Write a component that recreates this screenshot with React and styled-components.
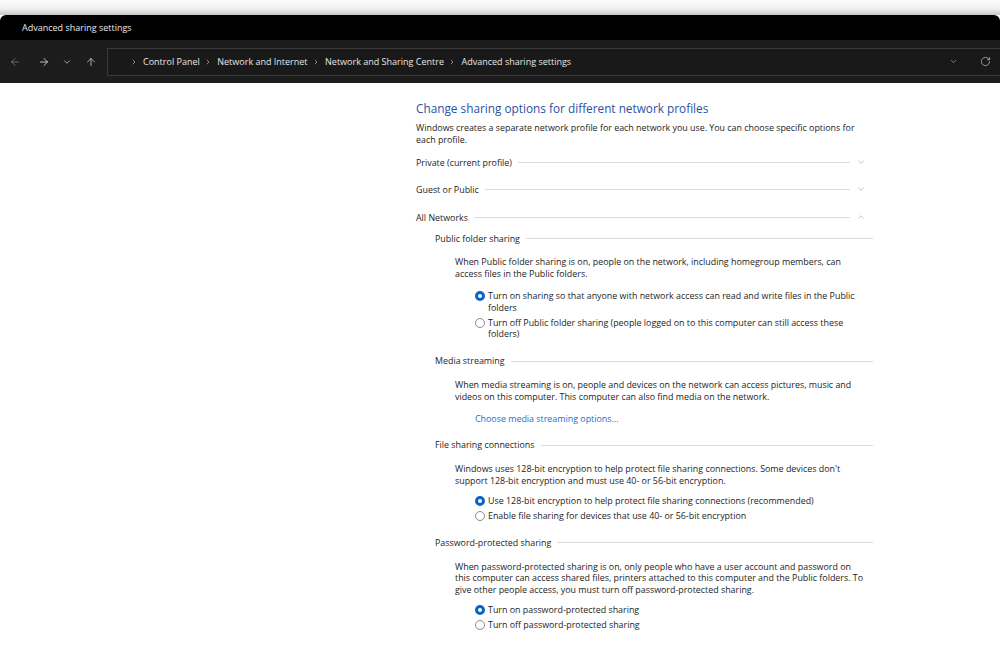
import React from "react";
import styled, { createGlobalStyle } from "styled-components";
import { ArrowLeft, ArrowRight, ArrowUp, ChevronDown, ChevronUp, ChevronRight, RotateCw } from "lucide-react";

const GlobalStyle = createGlobalStyle`
  html, body {
    margin: 0;
    padding: 0;
    background: #ffffff;
  }
  body {
    font-family: "Open Sans", "Noto Sans", sans-serif;
  }
`;

const Page = styled.div`
  width: 1000px;
  height: 672px;
  overflow: hidden;
  background: #ffffff;
`;

const Shadow = styled.div`
  height: 15px;
  background: linear-gradient(#fdfdfd, #f1f1f1 55%, #c9c9c9);
`;

const TitleBar = styled.div`
  height: 25px;
  background: #000;
  border-radius: 6px 6px 0 0;
  color: #e8e8e8;
  font-size: 9px;
  display: flex;
  align-items: center;
  padding-left: 22px;
`;

const AddressBar = styled.div`
  height: 43px;
  background: #1c1c1c;
  display: flex;
  align-items: center;
  padding-left: 3px;
`;

const NavButton = styled.div`
  width: 24px;
  height: 24px;
  display: flex;
  align-items: center;
  justify-content: center;
  color: ${({ dim }) => (dim ? "#8a8a8a" : "#e6e6e6")};
`;

const NavGroup = styled.div`
  display: flex;
  align-items: center;
  width: 104px;
  & > :nth-child(2) { margin-left: 5px; }
  & > :nth-child(3) { margin-left: -1px; }
`;

const PathBox = styled.div`
  flex: 1;
  height: 26px;
  margin-right: -10px;
  border: 1px solid #3a3a3a;
  border-right: none;
  background: #191919;
  display: flex;
  align-items: center;
  padding-left: 22px;
  color: #e6e6e6;
  font-size: 9px;
`;

const Crumb = styled.span`
  display: flex;
  align-items: center;
  margin-right: ${({ sep }) => (sep ? 5 : 4.5)}px;
  white-space: nowrap;
  svg { color: #bdbdbd; }
`;

const Spacer = styled.div`
  flex: 1;
`;

const BoxIcon = styled.div`
  display: flex;
  align-items: center;
  color: #bdbdbd;
  margin-right: ${({ gap }) => gap}px;
`;

const Main = styled.div`
  padding: 17px 0 0 416px;
  width: 457px;
  color: #1d1d1d;
  font-size: 8.9px;
  line-height: 11.7px;
`;

const Heading = styled.h1`
  margin: 0;
  font-size: 11.8px;
  line-height: 17px;
  font-weight: 400;
  color: #2a52a6;
`;

const Lead = styled.p`
  margin: 5px 0 0;
  padding-right: 5px;
`;

const ProfileRow = styled.div`
  display: flex;
  align-items: center;
  height: 12px;
  margin-top: ${({ top }) => top}px;
`;

const Rule = styled.div`
  flex: 1;
  height: 1px;
  background: #dcdcdc;
  margin: 0 ${({ right }) => right}px 0 6px;
`;

const Chevron = styled.div`
  display: flex;
  color: #8f8f8f;
  width: 12px;
  margin-right: 5px;
`;

const Sections = styled.div`
  margin-top: 9px;
  padding-left: 19px;
  display: flex;
  flex-direction: column;
  gap: 15px;
`;

const SectionHeader = styled.div`
  display: flex;
  align-items: center;
  height: 12px;
`;

const SectionBody = styled.div`
  padding-left: 20px;
  padding-right: 5px;
`;

const Desc = styled.p`
  margin: 12px 0 0;
`;

const Options = styled.div`
  margin-top: ${({ top }) => top}px;
  padding-left: 20px;
  display: flex;
  flex-direction: column;
  gap: 3.5px;
`;

const Option = styled.label`
  display: flex;
  align-items: flex-start;
  gap: 3px;
`;

const Radio = styled.span`
  flex: none;
  width: 10px;
  height: 10px;
  margin-top: 1px;
  box-sizing: border-box;
  border-radius: 50%;
  border: ${({ checked }) => (checked ? "3px solid #0a64c8" : "1px solid #8c8c8c")};
  background: #fff;
`;

const Link = styled.a`
  display: block;
  margin: 10px 0 0 20px;
  color: #1a6fd1;
  text-decoration: none;
`;

const profiles = [
  { name: "Private (current profile)", open: false, top: 11 },
  { name: "Guest or Public", open: false, top: 15 },
  { name: "All Networks", open: true, top: 16 },
];

const crumbs = ["Control Panel", "Network and Internet", "Network and Sharing Centre", "Advanced sharing settings"];

const RadioOption = ({ checked, children }) => (
  <Option>
    <Radio checked={checked} />
    <span>{children}</span>
  </Option>
);

export default function App() {
  return (
    <Page>
      <GlobalStyle />
      <Shadow />
      <TitleBar>Advanced sharing settings</TitleBar>
      <AddressBar>
        <NavGroup>
          <NavButton dim><ArrowLeft size={12} strokeWidth={1.4} /></NavButton>
          <NavButton><ArrowRight size={12} strokeWidth={1.6} /></NavButton>
          <NavButton><ChevronDown size={10} strokeWidth={1.6} /></NavButton>
          <NavButton><ArrowUp size={12} strokeWidth={1.4} /></NavButton>
        </NavGroup>
        <PathBox>
          {crumbs.map((c) => (
            <React.Fragment key={c}>
              <Crumb sep><ChevronRight size={8} strokeWidth={2} /></Crumb>
              <Crumb>{c}</Crumb>
            </React.Fragment>
          ))}
          <Spacer />
          <BoxIcon gap={22}><ChevronDown size={9} strokeWidth={1.6} /></BoxIcon>
          <BoxIcon gap={19}><RotateCw size={11} strokeWidth={1.6} /></BoxIcon>
        </PathBox>
      </AddressBar>

      <Main>
        <Heading>Change sharing options for different network profiles</Heading>
        <Lead>
          Windows creates a separate network profile for each network you use. You can choose specific options for
          each profile.
        </Lead>

        {profiles.map((p) => (
          <ProfileRow key={p.name} top={p.top}>
            <span>{p.name}</span>
            <Rule right={6} />
            <Chevron>{p.open ? <ChevronUp size={10} strokeWidth={1.3} /> : <ChevronDown size={10} strokeWidth={1.3} />}</Chevron>
          </ProfileRow>
        ))}

        <Sections>
          <div>
            <SectionHeader>
              <span>Public folder sharing</span>
              <Rule right={0} />
            </SectionHeader>
            <SectionBody>
              <Desc>
                When Public folder sharing is on, people on the network, including homegroup members, can access files in
                the Public folders.
              </Desc>
              <Options top={10}>
                <RadioOption checked>
                  Turn on sharing so that anyone with network access can read and write files in the Public folders
                </RadioOption>
                <RadioOption>
                  Turn off Public folder sharing (people logged on to this computer can still access these folders)
                </RadioOption>
              </Options>
            </SectionBody>
          </div>

          <div>
            <SectionHeader>
              <span>Media streaming</span>
              <Rule right={0} />
            </SectionHeader>
            <SectionBody>
              <Desc>
                When media streaming is on, people and devices on the network can access pictures, music and videos on
                this computer. This computer can also find media on the network.
              </Desc>
              <Link href="#">Choose media streaming options...</Link>
            </SectionBody>
          </div>

          <div>
            <SectionHeader>
              <span>File sharing connections</span>
              <Rule right={0} />
            </SectionHeader>
            <SectionBody>
              <Desc>
                Windows uses 128-bit encryption to help protect file sharing connections. Some devices don't support
                128-bit encryption and must use 40- or 56-bit encryption.
              </Desc>
              <Options top={8}>
                <RadioOption checked>
                  Use 128-bit encryption to help protect file sharing connections (recommended)
                </RadioOption>
                <RadioOption>Enable file sharing for devices that use 40- or 56-bit encryption</RadioOption>
              </Options>
            </SectionBody>
          </div>

          <div>
            <SectionHeader>
              <span>Password-protected sharing</span>
              <Rule right={0} />
            </SectionHeader>
            <SectionBody>
              <Desc>
                When password-protected sharing is on, only people who have a user account and password on this computer
                can access shared files, printers attached to this computer and the Public folders. To give other people
                access, you must turn off password-protected sharing.
              </Desc>
              <Options top={8.5}>
                <RadioOption checked>Turn on password-protected sharing</RadioOption>
                <RadioOption>Turn off password-protected sharing</RadioOption>
              </Options>
            </SectionBody>
          </div>
        </Sections>
      </Main>
    </Page>
  );
}
